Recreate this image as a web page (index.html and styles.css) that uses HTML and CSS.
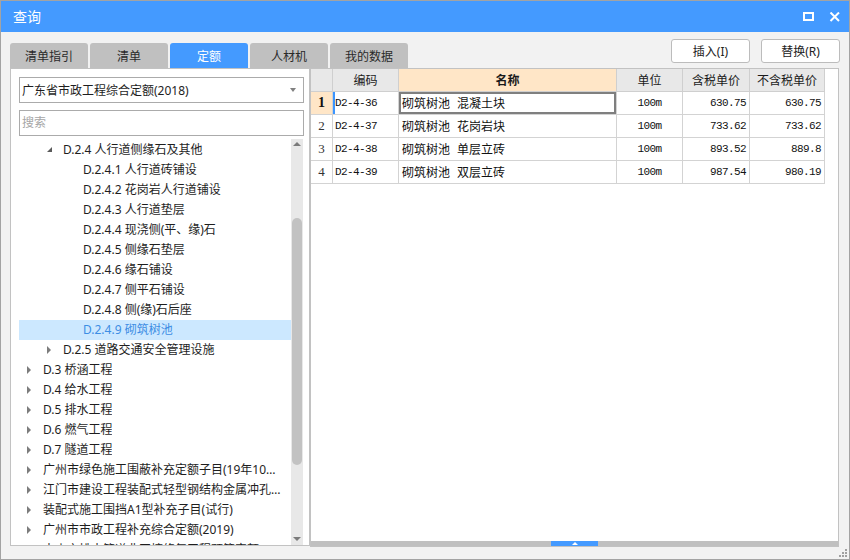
FILE: index.html
```html
<!DOCTYPE html>
<html lang="zh-CN">
<head>
<meta charset="utf-8">
<title>查询</title>
<link rel="stylesheet" href="styles.css">
</head>
<body>
<div class="window">
  <div class="titlebar">
    <span class="title">查询</span>
    <div class="ctrls">
      <svg class="ctrl" width="12" height="10" viewBox="0 0 12 10"><rect x="1" y="1" width="9" height="7" fill="none" stroke="#fff" stroke-width="2"/></svg>
      <svg class="ctrl" width="12" height="10" viewBox="0 0 12 10"><path d="M1.5 0.5 L10 9 M10 0.5 L1.5 9" stroke="#fff" stroke-width="2" fill="none"/></svg>
    </div>
  </div>
  <div class="body">
    <div class="toolbar">
      <div class="tabs">
        <div class="tab">清单指引</div>
        <div class="tab">清单</div>
        <div class="tab active">定额</div>
        <div class="tab">人材机</div>
        <div class="tab">我的数据</div>
      </div>
      <div class="btns">
        <div class="btn">插入(I)</div>
        <div class="btn">替换(R)</div>
      </div>
    </div>
    <div class="main">
      <div class="left">
        <div class="select"><span>广东省市政工程综合定额(2018)</span><i class="caret"></i></div>
        <div class="search">搜索</div>
        <div class="tree">
          <div class="rows">
            <div class="row l1"><i class="exp"></i><span class="lbl">D.2.4 人行道侧缘石及其他</span></div>
            <div class="row l2"><i class="none"></i><span class="lbl">D.2.4.1 人行道砖铺设</span></div>
            <div class="row l2"><i class="none"></i><span class="lbl">D.2.4.2 花岗岩人行道铺设</span></div>
            <div class="row l2"><i class="none"></i><span class="lbl">D.2.4.3 人行道垫层</span></div>
            <div class="row l2"><i class="none"></i><span class="lbl">D.2.4.4 现浇侧(平、缘)石</span></div>
            <div class="row l2"><i class="none"></i><span class="lbl">D.2.4.5 侧缘石垫层</span></div>
            <div class="row l2"><i class="none"></i><span class="lbl">D.2.4.6 缘石铺设</span></div>
            <div class="row l2"><i class="none"></i><span class="lbl">D.2.4.7 侧平石铺设</span></div>
            <div class="row l2"><i class="none"></i><span class="lbl">D.2.4.8 侧(缘)石后座</span></div>
            <div class="row l2 sel"><i class="none"></i><span class="lbl">D.2.4.9 砌筑树池</span></div>
            <div class="row l1"><i class="col"></i><span class="lbl">D.2.5 道路交通安全管理设施</span></div>
            <div class="row l0"><i class="col"></i><span class="lbl">D.3 桥涵工程</span></div>
            <div class="row l0"><i class="col"></i><span class="lbl">D.4 给水工程</span></div>
            <div class="row l0"><i class="col"></i><span class="lbl">D.5 排水工程</span></div>
            <div class="row l0"><i class="col"></i><span class="lbl">D.6 燃气工程</span></div>
            <div class="row l0"><i class="col"></i><span class="lbl">D.7 隧道工程</span></div>
            <div class="row l0"><i class="col"></i><span class="lbl">广州市绿色施工围蔽补充定额子目(19年10月)</span></div>
            <div class="row l0"><i class="col"></i><span class="lbl">江门市建设工程装配式轻型钢结构金属冲孔板围挡</span></div>
            <div class="row l0"><i class="col"></i><span class="lbl">装配式施工围挡A1型补充子目(试行)</span></div>
            <div class="row l0"><i class="col"></i><span class="lbl">广州市市政工程补充综合定额(2019)</span></div>
            <div class="row l0"><i class="col"></i><span class="lbl">中山市排水管道非开挖修复工程预算定额(2020)</span></div>
          </div>
          <div class="vscroll">
            <i class="up"></i>
            <div class="thumb"></div>
            <i class="down"></i>
          </div>
        </div>
      </div>
      <div class="right">
        <div class="grid">
          <div class="c h rh"></div>
          <div class="c h">编码</div>
          <div class="c h hl">名称</div>
          <div class="c h">单位</div>
          <div class="c h">含税单价</div>
          <div class="c h">不含税单价</div>

          <div class="c rh cur">1</div>
          <div class="c code curcode">D2-4-36</div>
          <div class="c name focus">砌筑树池 混凝土块</div>
          <div class="c unit">100m</div>
          <div class="c num">630.75</div>
          <div class="c num">630.75</div>

          <div class="c rh">2</div>
          <div class="c code">D2-4-37</div>
          <div class="c name">砌筑树池 花岗岩块</div>
          <div class="c unit">100m</div>
          <div class="c num">733.62</div>
          <div class="c num">733.62</div>

          <div class="c rh">3</div>
          <div class="c code">D2-4-38</div>
          <div class="c name">砌筑树池 单层立砖</div>
          <div class="c unit">100m</div>
          <div class="c num">893.52</div>
          <div class="c num">889.8</div>

          <div class="c rh">4</div>
          <div class="c code">D2-4-39</div>
          <div class="c name">砌筑树池 双层立砖</div>
          <div class="c unit">100m</div>
          <div class="c num">987.54</div>
          <div class="c num">980.19</div>
        </div>
        <div class="fill"></div>
        <div class="hscroll"><div class="hthumb"><i class="hup"></i></div></div>
      </div>
    </div>
    <svg class="grip" width="10" height="10" viewBox="0 0 10 10">
      <rect x="7" y="1" width="2" height="2" fill="#a0a0a0"/>
      <rect x="4" y="4" width="2" height="2" fill="#a0a0a0"/>
      <rect x="7" y="4" width="2" height="2" fill="#a0a0a0"/>
      <rect x="1" y="7" width="2" height="2" fill="#a0a0a0"/>
      <rect x="4" y="7" width="2" height="2" fill="#a0a0a0"/>
      <rect x="7" y="7" width="2" height="2" fill="#a0a0a0"/>
    </svg>
  </div>
</div>
</body>
</html>
```
FILE: styles.css
```css
* { box-sizing: border-box; }
html, body { margin: 0; padding: 0; }
body {
  width: 850px; height: 560px; overflow: hidden;
  font-family: "Noto Sans", "Noto Sans CJK SC", sans-serif;
  font-size: 12px; color: #1e1e1e;
}
.window {
  width: 850px; height: 560px;
  border: 1px solid #a3a3a3;
  display: flex; flex-direction: column;
  background: #f2f2f2;
}
.titlebar {
  height: 31px; flex: none;
  background: #449aff;
  display: flex; align-items: center; justify-content: space-between;
  padding: 0 8px 0 12px;
}
.title { color: #fff; font-size: 14px; line-height: 31px; }
.ctrls { display: flex; gap: 14px; align-items: center; }
.ctrl { display: block; }

.body { flex: 1; position: relative; display: flex; flex-direction: column; }
.toolbar {
  height: 36px; flex: none;
  display: flex; justify-content: space-between;
  padding: 0 9px;
}
.tabs { display: flex; gap: 2px; align-self: flex-end; }
.tab {
  width: 78px; height: 25px;
  background: #c0c0c0; color: #2a2a2a;
  border-radius: 3px 3px 0 0;
  display: flex; align-items: center; justify-content: center;
  font-size: 12px;
}
.tab.active { background: #449aff; color: #fff; }
.btns { display: flex; gap: 11px; margin-top: 7px; align-self: flex-start; }
.btn {
  width: 79px; height: 24px;
  background: #fff; border: 1px solid #bcbcbc; border-radius: 3px;
  display: flex; align-items: center; justify-content: center;
  color: #222;
}

.main { height: 479px; flex: none; display: flex; padding-left: 9px; }
.left {
  width: 300px; height: 478px;
  background: #fff; border: 1px solid #c2c2c2;
  padding: 8px 5px 0 8px;
  display: flex; flex-direction: column;
}
.select {
  width: 285px; height: 26px; flex: none;
  border: 1px solid #ababab; background: #fff;
  display: flex; align-items: center; justify-content: space-between;
  padding: 0 7px 0 2px;
}
.caret {
  width: 0; height: 0;
  border-left: 3.5px solid transparent; border-right: 3.5px solid transparent;
  border-top: 4px solid #808080;
}
.search {
  width: 285px; height: 26px; flex: none; margin-top: 7px;
  border: 1px solid #ababab;
  color: #a6a6a6; line-height: 24px; padding-left: 2px;
}
.tree { margin-top: 3px; height: 406px; display: flex; overflow: hidden; }
.rows { width: 272px; overflow: hidden; padding-top: 1px; }
.row {
  height: 20px; display: flex; align-items: center;
  white-space: nowrap; padding-right: 10px;
}
.row.l0 { padding-left: 4px; }
.row.l1 { padding-left: 24px; }
.row.l2 { padding-left: 44px; }
.row i { width: 20px; flex: none; height: 8px; position: relative; }
.row i.col::before {
  content: ""; position: absolute; left: 4px; top: 0;
  border-top: 4px solid transparent; border-bottom: 4px solid transparent;
  border-left: 4px solid #7c7c7c;
}
.row i.exp::before {
  content: ""; position: absolute; left: 4px; top: 1px;
  border-bottom: 5px solid #5a5a5a; border-left: 5px solid transparent;
}
.lbl { overflow: hidden; text-overflow: ellipsis; line-height: 20px; }
.row.sel { background: #cce8ff; }
.row.sel .lbl { color: #3d8de4; }

.vscroll {
  width: 12px; flex: none; background: #e8e8e8;
  display: flex; flex-direction: column; align-items: center;
}
.up {
  margin-top: 3px; width: 0; height: 0;
  border-left: 4px solid transparent; border-right: 4px solid transparent;
  border-bottom: 4px solid #7a7a7a;
}
.thumb {
  margin-top: 72px; width: 10px; height: 247px;
  background: #c2c2c2; border-radius: 5px;
}
.down {
  margin-top: auto; margin-bottom: 4px; width: 0; height: 0;
  border-left: 4px solid transparent; border-right: 4px solid transparent;
  border-top: 4px solid #7a7a7a;
}

.right {
  width: 529px; height: 479px;
  background: #fff; border: 1px solid #c2c2c2;
  display: flex; flex-direction: column;
}
.grid {
  display: grid;
  grid-template-columns: 22px 66px 218px 66px 67px 75px;
  grid-auto-rows: 23px;
  width: 514px;
}
.c {
  border-right: 1px solid #d3d3d3; border-bottom: 1px solid #d3d3d3;
  display: flex; align-items: center;
  white-space: nowrap; overflow: hidden;
  font-size: 12px; color: #111;
}
.c.h { background: #e8e8e8; justify-content: center; border-color: #cfcfcf; color: #1a1a1a; }
.c.hl { background: #ffe6c7; font-weight: bold; }
.c.rh {
  justify-content: center;
  font-family: "Liberation Serif", serif; font-size: 13px; color: #333;
}
.c.rh.h { background: #e8e8e8; }
.c.rh.cur { background: #ffe6c7; font-weight: bold; font-size: 14px; color: #111; }
.c.code, .c.unit, .c.num {
  font-family: "Liberation Mono", monospace; font-size: 11px; letter-spacing: -0.6px;
}
.c.code { padding-left: 2px; }
.c.curcode { box-shadow: inset 2px 0 0 #3b95ff; }
.c.name { padding-left: 3px; word-spacing: 4px; }
.c.focus { box-shadow: inset 0 0 0 2px #7f7f7f; }
.c.unit { justify-content: center; }
.c.num { justify-content: flex-end; padding-right: 3px; }
.fill { flex: 1; }
.hscroll {
  height: 5px; flex: none; background: #c0c0c0;
  position: relative;
}
.hthumb {
  position: absolute; left: 240px; top: 0;
  width: 47px; height: 5px; background: #449aff;
  display: flex; justify-content: center; align-items: center;
}
.hup {
  width: 0; height: 0;
  border-left: 3px solid transparent; border-right: 3px solid transparent;
  border-bottom: 3px solid #fff;
}
.grip { position: absolute; right: 1px; bottom: 1px; }
```
